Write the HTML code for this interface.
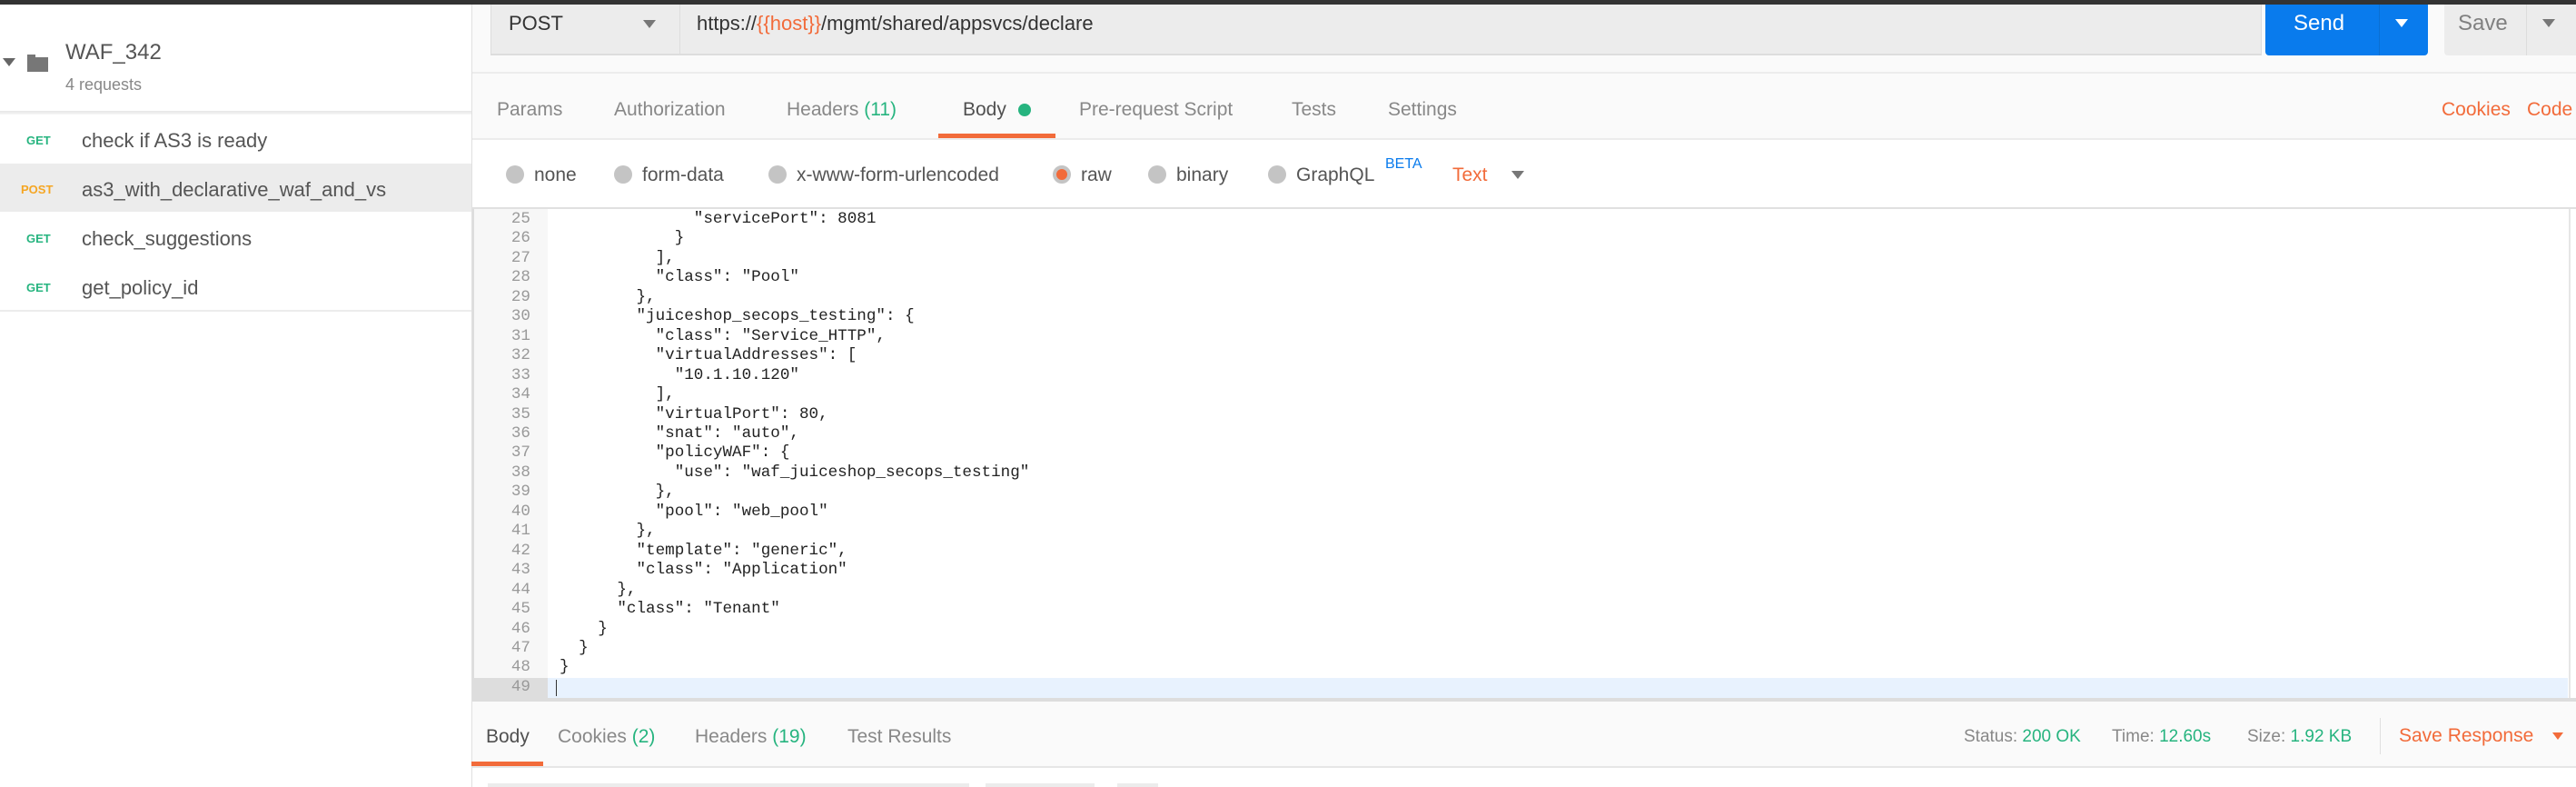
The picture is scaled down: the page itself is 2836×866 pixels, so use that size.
<!DOCTYPE html>
<html><head><meta charset="utf-8"><style>
*{margin:0;padding:0;box-sizing:border-box}
body{width:2836px;height:866px;overflow:hidden;background:#fafafa;font-family:"Liberation Sans",sans-serif;position:relative}
.a{position:absolute;white-space:nowrap}
.t{font-size:21px;color:#888;line-height:1}
.g{color:#26b47f}
.o{color:#f26b3a}
.code{position:absolute;left:616px;top:231px;font-family:"Liberation Mono",monospace;font-size:17.6px;line-height:21.46px;color:#222;white-space:pre}
.ln{position:absolute;left:520px;width:64px;top:231px;font-family:"Liberation Mono",monospace;font-size:17.6px;line-height:21.46px;color:#999;text-align:right;white-space:pre}
.radio{position:absolute;width:20px;height:20px;border-radius:50%;background:#c4c4c4;top:182px}
</style></head><body>
<div class="a" style="left:0;top:0;width:2836px;height:5px;background:#333"></div>
<!-- sidebar -->
<div class="a" style="left:0;top:5px;width:520px;height:861px;background:#fff;border-right:1px solid #e0e0e0"></div>
<div class="a" style="left:0;top:122px;width:519px;height:4px;background:linear-gradient(#e6e6e6,#f6f6f6)"></div>
<div class="a" style="left:3px;top:64px;width:0;height:0;border-left:7px solid transparent;border-right:7px solid transparent;border-top:9px solid #666"></div>
<div class="a" style="left:30px;top:63px;width:23px;height:16px;background:#777"></div>
<div class="a" style="left:30px;top:60px;width:9px;height:4px;background:#777"></div>
<div class="a" style="left:72px;top:44px;font-size:24px;color:#555">WAF_342</div>
<div class="a" style="left:72px;top:83px;font-size:18px;color:#888">4 requests</div>
<div class="a" style="left:0;top:180px;width:519px;height:53px;background:#ececec"></div>
<div class="a" style="left:29px;top:147px;font-size:13px;font-weight:bold;color:#26b47f">GET</div>
<div class="a" style="left:90px;top:142px;font-size:22px;color:#555">check if AS3 is ready</div>
<div class="a" style="left:23px;top:201px;font-size:13px;font-weight:bold;color:#f5a623">POST</div>
<div class="a" style="left:90px;top:196px;font-size:22px;color:#555">as3_with_declarative_waf_and_vs</div>
<div class="a" style="left:29px;top:255px;font-size:13px;font-weight:bold;color:#26b47f">GET</div>
<div class="a" style="left:90px;top:250px;font-size:22px;color:#555">check_suggestions</div>
<div class="a" style="left:29px;top:309px;font-size:13px;font-weight:bold;color:#26b47f">GET</div>
<div class="a" style="left:90px;top:304px;font-size:22px;color:#555">get_policy_id</div>
<div class="a" style="left:0;top:341px;width:519px;height:2px;background:#ececec"></div>
<!-- url bar -->
<div class="a" style="left:540px;top:5px;width:208px;height:56px;background:#ececec;border-bottom:2px solid #ddd;border-left:1px solid #ddd"></div>
<div class="a" style="left:560px;top:13px;font-size:22px;color:#333">POST</div>
<div class="a" style="left:708px;top:22px;border-left:7px solid transparent;border-right:7px solid transparent;border-top:9px solid #777"></div>
<div class="a" style="left:748px;top:5px;width:1742px;height:56px;background:#ececec;border-left:1px solid #ddd;border-bottom:2px solid #ddd;border-right:1px solid #ddd"></div>
<div class="a" style="left:767px;top:13px;font-size:22px;color:#333">https://<span class="o">{{host}}</span>/mgmt/shared/appsvcs/declare</div>
<div class="a" style="left:2494px;top:5px;width:179px;height:56px;background:#097bed;border-radius:0 0 4px 4px"></div>
<div class="a" style="left:2619px;top:5px;width:1px;height:56px;background:#0a6fd4"></div>
<div class="a" style="left:2525px;top:12px;font-size:24px;color:#fff">Send</div>
<div class="a" style="left:2637px;top:21px;border-left:7px solid transparent;border-right:7px solid transparent;border-top:9px solid #fff"></div>
<div class="a" style="left:2691px;top:5px;width:150px;height:56px;background:#ececec;border-radius:0 0 4px 4px"></div>
<div class="a" style="left:2781px;top:5px;width:1px;height:56px;background:#ddd"></div>
<div class="a" style="left:2706px;top:12px;font-size:24px;color:#808080">Save</div>
<div class="a" style="left:2799px;top:21px;border-left:7px solid transparent;border-right:7px solid transparent;border-top:9px solid #777"></div>
<!-- tabs -->
<div class="a" style="left:520px;top:79px;width:2316px;height:2px;background:#ececec"></div>
<div class="a" style="left:520px;top:152px;width:2316px;height:2px;background:#ececec"></div>
<div class="a t" style="left:547px;top:110px">Params</div>
<div class="a t" style="left:676px;top:110px">Authorization</div>
<div class="a t" style="left:866px;top:110px">Headers <span class="g">(11)</span></div>
<div class="a t" style="left:1060px;top:110px;color:#505050">Body</div>
<div class="a" style="left:1121px;top:114px;width:14px;height:14px;border-radius:50%;background:#26b47f"></div>
<div class="a" style="left:1033px;top:147px;width:129px;height:5px;background:#f26b3a"></div>
<div class="a t" style="left:1188px;top:110px">Pre-request Script</div>
<div class="a t" style="left:1422px;top:110px">Tests</div>
<div class="a t" style="left:1528px;top:110px">Settings</div>
<div class="a t o" style="left:2688px;top:110px">Cookies</div>
<div class="a t o" style="left:2782px;top:110px">Code</div>
<!-- body type -->
<div class="a" style="left:520px;top:154px;width:2316px;height:74px;background:#fff"></div>
<div class="radio" style="left:557px"></div><div class="a t" style="left:588px;top:182px;color:#555">none</div>
<div class="radio" style="left:676px"></div><div class="a t" style="left:707px;top:182px;color:#555">form-data</div>
<div class="radio" style="left:846px"></div><div class="a t" style="left:877px;top:182px;color:#555">x-www-form-urlencoded</div>
<div class="radio" style="left:1159px;background:#f26b3a;border:4px solid #c4c4c4"></div><div class="a t" style="left:1190px;top:182px;color:#555">raw</div>
<div class="radio" style="left:1264px"></div><div class="a t" style="left:1295px;top:182px;color:#555">binary</div>
<div class="radio" style="left:1396px"></div><div class="a t" style="left:1427px;top:182px;color:#555">GraphQL</div>
<div class="a" style="left:1525px;top:172px;font-size:16px;color:#097bed">BETA</div>
<div class="a t o" style="left:1599px;top:182px">Text</div>
<div class="a" style="left:1664px;top:188px;border-left:7px solid transparent;border-right:7px solid transparent;border-top:9px solid #777"></div>
<!-- editor -->
<div class="a" style="left:520px;top:228px;width:2316px;height:2px;background:#e0e0e0"></div>
<div class="a" style="left:520px;top:230px;width:2316px;height:539px;background:#fff;border-left:2px solid #ddd"></div>
<div class="a" style="left:522px;top:230px;width:81px;height:539px;background:#f7f7f7"></div>
<div class="a" style="left:522px;top:746px;width:81px;height:22px;background:#ddd"></div>
<div class="a" style="left:603px;top:746px;width:2224px;height:22px;background:#e8f2fe"></div>
<div class="a" style="left:612px;top:748px;width:1px;height:18px;background:#333"></div>
<div class="a" style="left:2828px;top:230px;width:2px;height:539px;background:#e6e6e6"></div>
<div class="ln">25
26
27
28
29
30
31
32
33
34
35
36
37
38
39
40
41
42
43
44
45
46
47
48
49</div>
<div class="code">              "servicePort": 8081
            }
          ],
          "class": "Pool"
        },
        "juiceshop_secops_testing": {
          "class": "Service_HTTP",
          "virtualAddresses": [
            "10.1.10.120"
          ],
          "virtualPort": 80,
          "snat": "auto",
          "policyWAF": {
            "use": "waf_juiceshop_secops_testing"
          },
          "pool": "web_pool"
        },
        "template": "generic",
        "class": "Application"
      },
      "class": "Tenant"
    }
  }
}
</div>
<div class="a" style="left:520px;top:768px;width:2316px;height:4px;background:#ddd"></div>
<!-- response -->
<div class="a t" style="left:535px;top:800px;color:#505050">Body</div>
<div class="a t" style="left:614px;top:800px">Cookies <span class="g">(2)</span></div>
<div class="a t" style="left:765px;top:800px">Headers <span class="g">(19)</span></div>
<div class="a t" style="left:933px;top:800px">Test Results</div>
<div class="a" style="left:519px;top:838px;width:79px;height:5px;background:#f26b3a"></div>
<div class="a" style="left:520px;top:843px;width:2316px;height:2px;background:#e6e6e6"></div>
<div class="a" style="left:520px;top:845px;width:2316px;height:21px;background:#fff"></div>
<div class="a" style="left:2162px;top:800px;font-size:19px;color:#888">Status: <span class="g">200 OK</span></div>
<div class="a" style="left:2325px;top:800px;font-size:19px;color:#888">Time: <span class="g">12.60s</span></div>
<div class="a" style="left:2474px;top:800px;font-size:19px;color:#888">Size: <span class="g">1.92 KB</span></div>
<div class="a" style="left:2620px;top:790px;width:1px;height:40px;background:#e0e0e0"></div>
<div class="a o" style="left:2641px;top:798px;font-size:21px">Save Response</div>
<div class="a" style="left:2810px;top:806px;border-left:6px solid transparent;border-right:6px solid transparent;border-top:8px solid #f26b3a"></div>
<div class="a" style="left:537px;top:862px;width:530px;height:4px;background:#ececec"></div>
<div class="a" style="left:1085px;top:862px;width:120px;height:4px;background:#ececec"></div>
<div class="a" style="left:1230px;top:862px;width:45px;height:4px;background:#ececec"></div>
</body></html>
